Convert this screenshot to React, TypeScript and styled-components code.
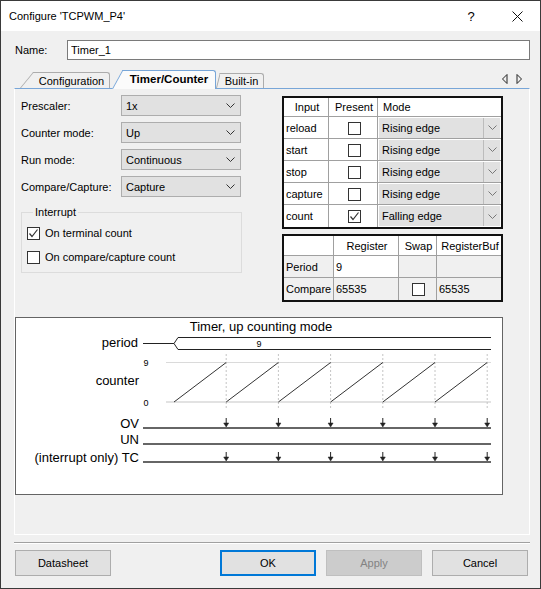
import styled, { createGlobalStyle } from "styled-components";

const GlobalStyle = createGlobalStyle`
  html, body {
    margin: 0;
    padding: 0;
    background: #f0f0f0;
  }
  body {
    font-family: "Liberation Sans", Arial, sans-serif;
    font-size: 11px;
    color: #000;
  }
  * {
    box-sizing: border-box;
  }
`;

const RAMP_X = [158, 210.2, 262.4, 314.6, 366.8, 419, 471.2];

const inputs = [
  { name: "reload", present: false, mode: "Rising edge" },
  { name: "start", present: false, mode: "Rising edge" },
  { name: "stop", present: false, mode: "Rising edge" },
  { name: "capture", present: false, mode: "Rising edge" },
  { name: "count", present: true, mode: "Falling edge" },
];

const settings = [
  { label: "Prescaler:", value: "1x" },
  { label: "Counter mode:", value: "Up" },
  { label: "Run mode:", value: "Continuous" },
  { label: "Compare/Capture:", value: "Capture" },
];

const Chevron = ({ color = "#333" }) => (
  <svg width="9" height="5" viewBox="0 0 9 5">
    <polyline points="0.5,0.5 4.5,4.5 8.5,0.5" fill="none" stroke={color} strokeWidth="1" />
  </svg>
);

const CheckBox = ({ checked }: { checked?: boolean }) => (
  <Box>
    {checked && (
      <svg width="11" height="11" viewBox="0 0 11 11">
        <polyline points="1.5,5.5 4,8.5 9.5,1.5" fill="none" stroke="#333" strokeWidth="1.2" />
      </svg>
    )}
  </Box>
);

const Tab = ({ label, active, slant, gap, width, height }) => {
  const angle = (Math.atan(slant / (height + 1)) * 180) / Math.PI;
  return (
    <TabShape $active={active} $slant={slant} $gap={gap} $w={width} $h={height} $angle={angle}>
      {label}
    </TabShape>
  );
};

const Diagram = () => (
  <DiagramBox>
    <svg width="486" height="176" viewBox="0 0 486 176">
      <g fontFamily="'Liberation Sans', Arial, sans-serif" fill="#000">
        <text x="245" y="13" fontSize="13" textAnchor="middle">Timer, up counting mode</text>
        <text x="122" y="29" fontSize="13" textAnchor="end">period</text>
        <text x="123" y="67" fontSize="13" textAnchor="end">counter</text>
        <text x="130" y="48" fontSize="9" textAnchor="middle">9</text>
        <text x="130" y="88" fontSize="9" textAnchor="middle">0</text>
        <text x="243" y="29" fontSize="9" textAnchor="middle">9</text>
        <text x="123" y="110" fontSize="13" textAnchor="end">OV</text>
        <text x="123" y="126" fontSize="13" textAnchor="end">UN</text>
        <text x="123" y="144" fontSize="13" textAnchor="end">(interrupt only) TC</text>
      </g>

      <line x1="127" y1="25.5" x2="158" y2="25.5" stroke="#222" strokeWidth="1" />
      <path d="M475 19.5 H162 L158 25.5 L162 31.5 H475" fill="none" stroke="#222" strokeWidth="1" />

      <line x1="150" y1="44.5" x2="475" y2="44.5" stroke="#dadada" strokeWidth="1" />
      <line x1="150" y1="84" x2="475" y2="84" stroke="#e2e2e2" strokeWidth="2" />

      {RAMP_X.slice(1).map((x) => (
        <line key={`v${x}`} x1={x} y1="36" x2={x} y2="92" stroke="#c4c4c4" strokeWidth="1" strokeDasharray="2 2" />
      ))}
      {RAMP_X.slice(0, -1).map((x, i) => (
        <line key={`r${x}`} x1={x} y1="84" x2={RAMP_X[i + 1]} y2="44.5" stroke="#333" strokeWidth="1" />
      ))}

      <line x1="127" y1="110" x2="475" y2="110" stroke="#333" strokeWidth="1.6" />
      <line x1="127" y1="126" x2="475" y2="126" stroke="#333" strokeWidth="1.4" />
      <line x1="127" y1="144" x2="475" y2="144" stroke="#666" strokeWidth="2" />

      {RAMP_X.slice(1).map((x) => (
        <g key={`a${x}`} fill="#222" stroke="#222">
          <line x1={x} y1="100" x2={x} y2="106" strokeWidth="1" />
          <polygon points={`${x - 2.5},105 ${x + 2.5},105 ${x},109`} strokeWidth="0.5" />
          <line x1={x} y1="134" x2={x} y2="140" strokeWidth="1" />
          <polygon points={`${x - 2.5},139 ${x + 2.5},139 ${x},143`} strokeWidth="0.5" />
        </g>
      ))}
    </svg>
  </DiagramBox>
);

export default function App() {
  return (
    <>
      <GlobalStyle />
      <Window>
        <TitleBar>
          <TitleText>Configure 'TCPWM_P4'</TitleText>
          <TitleButton>?</TitleButton>
          <TitleButton>
            <svg width="11" height="11" viewBox="0 0 11 11">
              <path d="M0.5 0.5 L10.5 10.5 M10.5 0.5 L0.5 10.5" stroke="#111" strokeWidth="1" />
            </svg>
          </TitleButton>
        </TitleBar>

        <Body>
          <NameRow>
            <NameLabel>Name:</NameLabel>
            <NameInput defaultValue="Timer_1" />
          </NameRow>

          <TabStrip>
            <Tab label="Configuration" slant={14} gap={0} width={76} height={16} />
            <Tab label="Timer/Counter" active slant={11} gap={2} width={93} height={19} />
            <Tab label="Built-in" slant={4} gap={0} width={44} height={15} />
            <ScrollArrows>
              <svg width="22" height="10" viewBox="0 0 22 10">
                <polygon points="6,0.5 1.5,5 6,9.5" fill="none" stroke="#222" strokeWidth="1" />
                <polygon points="16,0.5 20.5,5 16,9.5" fill="none" stroke="#222" strokeWidth="1" />
              </svg>
            </ScrollArrows>
          </TabStrip>

          <Panel>
            <TopRow>
              <LeftColumn>
                {settings.map((s) => (
                  <FormRow key={s.label}>
                    <FieldLabel>{s.label}</FieldLabel>
                    <Combo>
                      <span>{s.value}</span>
                      <Chevron />
                    </Combo>
                  </FormRow>
                ))}
                <GroupBox>
                  <Legend>Interrupt</Legend>
                  <CheckRow>
                    <CheckBox checked />
                    <span>On terminal count</span>
                  </CheckRow>
                  <CheckRow>
                    <CheckBox />
                    <span>On compare/capture count</span>
                  </CheckRow>
                </GroupBox>
              </LeftColumn>

              <RightColumn>
                <GridTable>
                  <colgroup>
                    <col style={{ width: 45 }} />
                    <col style={{ width: 49 }} />
                    <col style={{ width: 123 }} />
                  </colgroup>
                  <tbody>
                    <HeaderRow>
                      <Cell $align="center">Input</Cell>
                      <Cell $align="center">Present</Cell>
                      <Cell $pad={5}>Mode</Cell>
                    </HeaderRow>
                    {inputs.map((r) => (
                      <BodyRow key={r.name}>
                        <Cell>{r.name}</Cell>
                        <Cell $align="center">
                          <CheckBox checked={r.present} />
                        </Cell>
                        <Cell $pad={1}>
                          <ModeSelect>
                            <ModeText>{r.mode}</ModeText>
                            <DropPart>
                              <Chevron color="#777" />
                            </DropPart>
                          </ModeSelect>
                        </Cell>
                      </BodyRow>
                    ))}
                  </tbody>
                </GridTable>

                <GridTable>
                  <colgroup>
                    <col style={{ width: 50 }} />
                    <col style={{ width: 65 }} />
                    <col style={{ width: 38 }} />
                    <col style={{ width: 64 }} />
                  </colgroup>
                  <tbody>
                    <RegHeaderRow>
                      <Cell />
                      <Cell $align="center">Register</Cell>
                      <Cell $align="center">Swap</Cell>
                      <Cell $align="center">RegisterBuf</Cell>
                    </RegHeaderRow>
                    <BodyRow>
                      <Cell $bg="#f0f0f0">Period</Cell>
                      <Cell>9</Cell>
                      <Cell $bg="#f0f0f0" />
                      <Cell $bg="#f0f0f0" />
                    </BodyRow>
                    <BodyRow>
                      <Cell $bg="#f0f0f0">Compare</Cell>
                      <Cell $bg="#f0f0f0">65535</Cell>
                      <Cell $bg="#f0f0f0" $align="center">
                        <CheckBox />
                      </Cell>
                      <Cell $bg="#f0f0f0">65535</Cell>
                    </BodyRow>
                  </tbody>
                </GridTable>
              </RightColumn>
            </TopRow>

            <Diagram />
          </Panel>

          <Separator />

          <ButtonRow>
            <Button>Datasheet</Button>
            <Spacer />
            <Button $primary>OK</Button>
            <Button disabled>Apply</Button>
            <Button>Cancel</Button>
          </ButtonRow>
        </Body>
      </Window>
    </>
  );
}

const Window = styled.div`
  width: 541px;
  height: 589px;
  border: 1px solid #3a3a3a;
  background: #f0f0f0;
  display: flex;
  flex-direction: column;
`;

const TitleBar = styled.div`
  height: 30px;
  flex-shrink: 0;
  background: #fff;
  display: flex;
  align-items: center;
  padding-left: 8px;
`;

const TitleText = styled.div`
  flex: 1;
  font-size: 11px;
`;

const TitleButton = styled.div`
  width: 46px;
  height: 30px;
  display: flex;
  align-items: center;
  justify-content: center;
  font-size: 13px;
`;

const Body = styled.div`
  flex: 1;
  padding: 9px 10px 0 13px;
  display: flex;
  flex-direction: column;
`;

const NameRow = styled.div`
  height: 20px;
  display: flex;
  align-items: center;
`;

const NameLabel = styled.label`
  width: 53px;
  padding-left: 1px;
`;

const NameInput = styled.input`
  flex: 1;
  height: 20px;
  border: 1px solid #7a7a7a;
  background: #fff;
  padding: 0 3px;
  font: inherit;
  outline: none;
`;

const TabStrip = styled.div`
  position: relative;
  z-index: 1;
  margin-top: 10px;
  height: 18px;
  display: flex;
  align-items: flex-end;
  padding-left: 6px;
`;

const TabShape = styled.div<{ $active?: boolean; $slant: number; $gap: number; $w: number; $h: number; $angle: number }>`
  position: relative;
  width: ${(p) => p.$w}px;
  height: ${(p) => p.$h}px;
  margin-left: ${(p) => p.$gap + p.$slant}px;
  margin-bottom: ${(p) => (p.$active ? -1 : 0)}px;
  background: ${(p) => (p.$active ? "#fbfbfb" : "#f0f0f0")};
  border-top: 1px solid ${(p) => (p.$active ? "#78a6d8" : "#acacac")};
  border-right: 1px solid ${(p) => (p.$active ? "#78a6d8" : "#acacac")};
  border-top-right-radius: 3px;
  font-weight: ${(p) => (p.$active ? "bold" : "normal")};
  font-size: ${(p) => (p.$active ? "11.5px" : "11px")};
  display: flex;
  align-items: center;
  justify-content: center;
  padding-bottom: ${(p) => (p.$active ? 2 : 0)}px;

  &::before {
    content: "";
    position: absolute;
    top: -1px;
    bottom: 0;
    left: -${(p) => p.$slant}px;
    width: ${(p) => p.$slant * 2}px;
    background: inherit;
    border-left: 1px solid ${(p) => (p.$active ? "#78a6d8" : "#acacac")};
    border-top: 1px solid ${(p) => (p.$active ? "#78a6d8" : "#acacac")};
    transform-origin: bottom left;
    transform: skewX(-${(p) => p.$angle}deg);
    z-index: -1;
  }
`;

const ScrollArrows = styled.div`
  margin-left: auto;
  margin-right: 7px;
  align-self: center;
  display: flex;
`;

const Panel = styled.div`
  height: 447px;
  flex-shrink: 0;
  border: 1px solid #fff;
  border-top-color: #78a6d8;
  display: flex;
  flex-direction: column;
`;

const TopRow = styled.div`
  display: flex;
  gap: 40px;
  padding: 6px 0 0 6px;
`;

const LeftColumn = styled.div`
  width: 221px;
  display: flex;
  flex-direction: column;
  gap: 6px;
`;

const FormRow = styled.div`
  height: 21px;
  display: flex;
  align-items: center;
`;

const FieldLabel = styled.div`
  width: 100px;
`;

const Combo = styled.div`
  width: 120px;
  height: 21px;
  border: 1px solid #adadad;
  background: #e1e1e1;
  display: flex;
  align-items: center;
  justify-content: space-between;
  padding: 0 5px 0 4px;
`;

const GroupBox = styled.fieldset`
  margin: 2px 0 0;
  width: 221px;
  border: 1px solid #dcdcdc;
  padding: 6px 0 7px 5px;
  display: flex;
  flex-direction: column;
  gap: 8px;
`;

const Legend = styled.legend`
  padding: 0 2px;
  margin-left: 6px;
  line-height: 14px;
`;

const CheckRow = styled.div`
  height: 16px;
  display: flex;
  align-items: center;
  gap: 5px;
`;

const Box = styled.span`
  width: 13px;
  height: 13px;
  border: 1px solid #333;
  background: #fff;
  display: inline-flex;
  align-items: center;
  justify-content: center;
  vertical-align: middle;
`;

const RightColumn = styled.div`
  width: 221px;
  margin-top: 1px;
  display: flex;
  flex-direction: column;
  gap: 5px;
`;

const GridTable = styled.table`
  width: 221px;
  border: 2px solid #111;
  border-collapse: separate;
  border-spacing: 0;
  table-layout: fixed;
  background: #fff;

  td {
    border-right: 1px solid #a0a0a0;
    border-bottom: 1px solid #a0a0a0;
  }
  td:last-child {
    border-right: none;
  }
  tr:last-child td {
    border-bottom: none;
  }
`;

const HeaderRow = styled.tr`
  height: 19px;
`;

const RegHeaderRow = styled.tr`
  height: 20px;
`;

const BodyRow = styled.tr`
  height: 22px;
`;

const Cell = styled.td<{ $align?: string; $bg?: string; $pad?: number }>`
  padding: 0 ${(p) => (p.$pad === 1 ? 1 : 0)}px 0 ${(p) => p.$pad ?? 2}px;
  text-align: ${(p) => p.$align ?? "left"};
  background: ${(p) => p.$bg ?? "#fff"};
  white-space: nowrap;
  overflow: hidden;
  line-height: 14px;
`;

const ModeSelect = styled.div`
  height: 20px;
  display: flex;
  background: #e1e1e1;
`;

const ModeText = styled.div`
  flex: 1;
  display: flex;
  align-items: center;
  padding-left: 3px;
`;

const DropPart = styled.div`
  width: 17px;
  border-left: 1px solid #bcbcbc;
  display: flex;
  align-items: center;
  justify-content: center;
`;

const DiagramBox = styled.div`
  margin-top: 15px;
  width: 488px;
  height: 178px;
  border: 1px solid #646464;
  background: #fff;
`;

const Separator = styled.div`
  margin-top: 7px;
  height: 2px;
  border-top: 1px solid #a0a0a0;
  border-bottom: 1px solid #fff;
`;

const ButtonRow = styled.div`
  margin-top: 6px;
  height: 26px;
  display: flex;
  gap: 10px;
  padding: 0 2px 0 1px;
`;

const Spacer = styled.div`
  flex: 1;
`;

const Button = styled.button<{ $primary?: boolean }>`
  width: 96px;
  height: 26px;
  font: inherit;
  color: #000;
  background: #e1e1e1;
  border: ${(p) => (p.$primary ? "2px solid #0078d7" : "1px solid #adadad")};
  padding: 0;

  &:disabled {
    background: #cccccc;
    border-color: #bfbfbf;
    color: #838383;
  }
`;
